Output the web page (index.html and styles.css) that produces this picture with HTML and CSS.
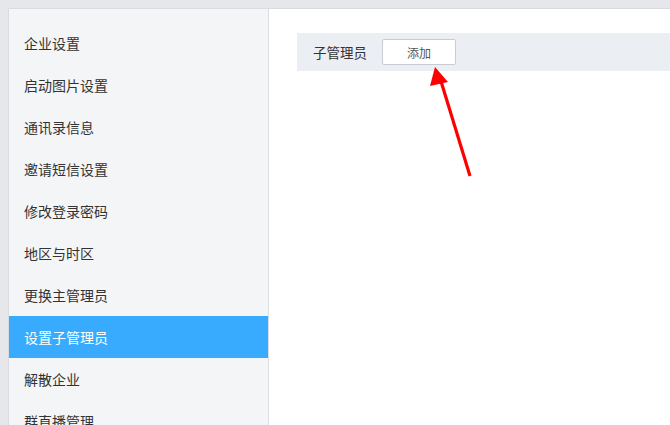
FILE: index.html
```html
<!DOCTYPE html>
<html lang="zh">
<head>
<meta charset="utf-8">
<link rel="stylesheet" href="styles.css">
</head>
<body>
<div class="page">
  <div class="card">
    <nav class="sidebar">
      <div class="item">企业设置</div>
      <div class="item">启动图片设置</div>
      <div class="item">通讯录信息</div>
      <div class="item">邀请短信设置</div>
      <div class="item">修改登录密码</div>
      <div class="item">地区与时区</div>
      <div class="item">更换主管理员</div>
      <div class="item active">设置子管理员</div>
      <div class="item">解散企业</div>
      <div class="item">群直播管理</div>
    </nav>
    <main class="content">
      <div class="bar">
        <span class="label">子管理员</span>
        <button class="btn">添加</button>
      </div>
      <svg class="arrow" width="60" height="130" viewBox="0 0 60 130">
        <line x1="49" y1="126" x2="19" y2="28" stroke="#ff0000" stroke-width="3.2" stroke-linecap="butt"/>
        <polygon points="14,17 9,36 27,32" fill="#ff0000"/>
      </svg>
    </main>
  </div>
</div>
</body>
</html>
```
FILE: styles.css
```css
html, body {
  margin: 0;
  padding: 0;
}
body {
  background: #e6e7eb;
  font-family: "Noto Sans CJK SC", "Noto Sans", sans-serif;
  width: 670px;
  height: 425px;
  overflow: hidden;
}
.page {
  padding: 8px 0 0 8px;
}
.card {
  display: flex;
  height: 425px;
  background: #ffffff;
  border-top: 1px solid #dadbdf;
  border-left: 1px solid #dadbdf;
  border-top-left-radius: 2px;
}
.sidebar {
  width: 259px;
  flex: none;
  background: #f4f5f7;
  border-right: 1px solid #dcdde0;
  padding-top: 13px;
}
.item {
  height: 42px;
  line-height: 42px;
  padding-left: 15px;
  font-size: 14px;
  color: #333333;
}
.item.active {
  background: #38abff;
  color: #ffffff;
}
.content {
  flex: 1;
  position: relative;
  padding: 24px 0 0 28px;
}
.bar {
  height: 38px;
  background: #ebeef2;
  display: flex;
  align-items: center;
  padding-left: 16px;
}
.label {
  font-size: 13.5px;
  color: #333333;
  white-space: nowrap;
}
.btn {
  margin-left: 15px;
  width: 74px;
  height: 26px;
  background: #ffffff;
  border: 1px solid #c9ccd2;
  border-radius: 2px;
  font-family: inherit;
  font-size: 12px;
  color: #555555;
  padding: 0;
}
.arrow {
  position: absolute;
  left: 152px;
  top: 41px;
}
```
